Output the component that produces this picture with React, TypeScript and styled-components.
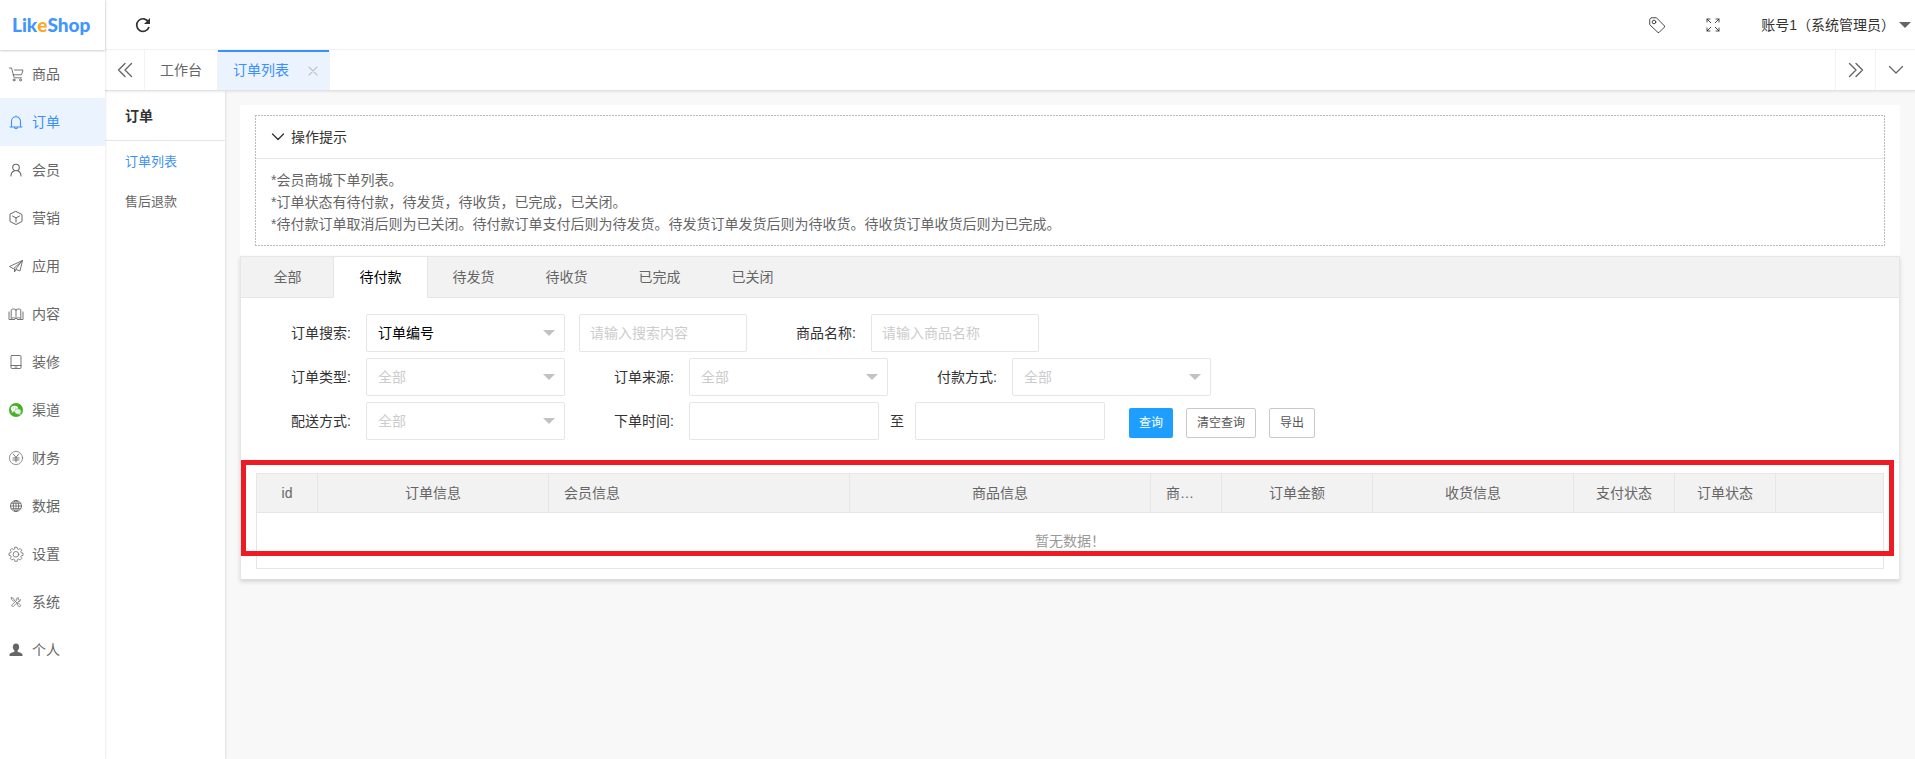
import React from "react";
import styled, { createGlobalStyle } from "styled-components";

const BLUE = "#3a91fb";
const BLUE_SOFT = "#ebf3ff";
const LINE = "#e6e6e6";

const GlobalStyle = createGlobalStyle`
  *, *::before, *::after { box-sizing: border-box; }
  body {
    margin: 0;
    background: #f8f8f8;
    color: #333;
    font: 14px/22px "Liberation Sans", "Noto Sans CJK SC", sans-serif;
  }
  button, input, select { font: inherit; color: inherit; margin: 0; }
  button { cursor: pointer; }
  a { color: inherit; text-decoration: none; }
  ul { list-style: none; margin: 0; padding: 0; }
  p { margin: 0; }
`;

const Shell = styled.div`
  display: flex;
  min-height: 100vh;
`;

/* ---- primary sidebar ---- */
const Sidebar = styled.aside`
  flex: 0 0 105px;
  background: #fff;
  box-shadow: 1px 0 2px rgba(0, 0, 0, 0.08);
  z-index: 2;
`;

const Logo = styled.a`
  display: flex;
  align-items: center;
  height: 50px;
  padding-left: 12px;
  box-shadow: 0 1px 2px rgba(0, 0, 0, 0.2);
  color: #4095ff;
  font: 900 19px/24px Lato, sans-serif;
`;

const LogoAccent = styled.span`
  color: #ffa724;
`;

const NavLink = styled.a<{ $active?: boolean }>`
  display: flex;
  align-items: center;
  gap: 8px;
  height: 48px;
  padding-left: 8px;
  color: ${(p) => (p.$active ? BLUE : "#666")};
  background: ${(p) => (p.$active ? BLUE_SOFT : "transparent")};
`;

const Icon = styled.svg<{ $size?: number }>`
  flex: none;
  display: block;
  width: ${(p) => p.$size ?? 16}px;
  height: ${(p) => p.$size ?? 16}px;
  fill: none;
  stroke: currentColor;
  stroke-width: 0.9;
  stroke-linecap: round;
  stroke-linejoin: round;
`;

/* ---- top area ---- */
const Main = styled.div`
  flex: 1;
  min-width: 0;
  display: flex;
  flex-direction: column;
`;

const TopBar = styled.header`
  display: flex;
  align-items: center;
  height: 50px;
  padding: 0 4px 0 30px;
  background: #fff;
  border-bottom: 1px solid #f2f2f2;
`;

const IconButton = styled.button`
  display: flex;
  align-items: center;
  justify-content: center;
  width: 16px;
  height: 16px;
  padding: 0;
  border: 0;
  background: none;
`;

const TopRight = styled.div`
  display: flex;
  align-items: center;
  gap: 40px;
  margin-left: auto;
`;

const UserButton = styled.button`
  display: flex;
  align-items: center;
  gap: 4px;
  padding: 0;
  border: 0;
  background: none;
  line-height: 24px;
`;

const Caret = styled.span<{ $color: string }>`
  border: 6px solid transparent;
  border-top-color: ${(p) => p.$color};
  border-bottom-width: 0;
`;

const PageTabs = styled.nav`
  display: flex;
  height: 41px;
  background: #fff;
  border-bottom: 1px solid #e2e2e2;
  box-shadow: 0 1px 2px rgba(0, 0, 0, 0.08);
  color: #666;
  z-index: 1;
`;

const TabControl = styled.button<{ $side: "left" | "right" }>`
  display: flex;
  align-items: center;
  justify-content: center;
  width: 40px;
  padding: 0;
  border: 0 solid #f2f2f2;
  border-left-width: ${(p) => (p.$side === "right" ? "1px" : "0")};
  border-right-width: ${(p) => (p.$side === "left" ? "1px" : "0")};
  background: none;
`;

const PageTab = styled.div<{ $active?: boolean }>`
  display: flex;
  align-items: center;
  gap: 18px;
  padding: 0 ${(p) => (p.$active ? "10px" : "15px")} 0 15px;
  border-right: 1px solid #f2f2f2;
  color: ${(p) => (p.$active ? BLUE : "#666")};
  background: ${(p) => (p.$active ? BLUE_SOFT : "transparent")};
  box-shadow: ${(p) => (p.$active ? `inset 0 2px 0 ${BLUE}` : "none")};
`;

const CloseButton = styled.button`
  padding: 2px 0 0;
  border: 0;
  background: none;
  color: #c2c2c2;
`;

const Spacer = styled.div`
  flex: 1;
`;

const Body = styled.div`
  flex: 1;
  display: flex;
`;

/* ---- secondary menu ---- */
const SubMenu = styled.nav`
  flex: 0 0 120px;
  background: #fff;
  box-shadow: 1px 0 2px rgba(0, 0, 0, 0.1);
`;

const SubTitle = styled.div`
  height: 50px;
  margin-bottom: 1px;
  padding-left: 20px;
  border-bottom: 1px solid ${LINE};
  font-weight: bold;
  line-height: 50px;
`;

const SubLink = styled.a<{ $active?: boolean }>`
  display: block;
  padding-left: 20px;
  font-size: 13px;
  line-height: 40px;
  color: ${(p) => (p.$active ? BLUE : "#666")};
`;

/* ---- content ---- */
const Content = styled.main`
  flex: 1;
  min-width: 0;
  padding: 14px 15px;
`;

const Card = styled.section`
  background: #fff;
  border-radius: 2px;
  padding-top: 10px;
`;

/* fine dashes, two pixels on and one off, along each edge */
const Tips = styled.section`
  --h: repeating-linear-gradient(90deg, #bbb 0 2px, transparent 2px 3px);
  --v: repeating-linear-gradient(#bbb 0 2px, transparent 2px 3px);
  margin: 0 15px 10px;
  padding: 1px;
  background:
    var(--h) top / 100% 1px no-repeat,
    var(--h) bottom / 100% 1px no-repeat,
    var(--v) left / 1px 100% no-repeat,
    var(--v) right / 1px 100% no-repeat;
`;

const TipsHead = styled.button`
  display: flex;
  align-items: center;
  gap: 6px;
  width: 100%;
  height: 43px;
  padding: 0 15px;
  border: 0;
  border-bottom: 1px solid ${LINE};
  background: none;
`;

const TipsBody = styled.div`
  padding: 10px 15px;
  color: #666;
`;

const Panel = styled.section`
  position: relative;
  border: 1px solid ${LINE};
  border-bottom-color: #ddd;
  box-shadow: 0 2px 4px rgba(0, 0, 0, 0.14);
`;

const StatusTabs = styled.div`
  display: flex;
  height: 41px;
  background: #f2f2f2;
`;

const StatusTab = styled.button<{ $active?: boolean }>`
  width: ${(p) => (p.$active ? "95px" : "93px")};
  margin: 0 ${(p) => (p.$active ? "-1px" : "0")};
  padding: 0;
  border: 0 solid ${LINE};
  border-width: ${(p) => (p.$active ? "0 1px 1px" : "0 0 1px")};
  border-bottom-color: ${(p) => (p.$active ? "#fff" : LINE)};
  background: ${(p) => (p.$active ? "#fff" : "transparent")};
  color: ${(p) => (p.$active ? "#000" : "#666")};
  z-index: ${(p) => (p.$active ? 1 : 0)};
`;

const StatusRest = styled.div`
  flex: 1;
  border-bottom: 1px solid ${LINE};
`;

const Filters = styled.form`
  display: flex;
  flex-direction: column;
  gap: 6px;
  padding: 16px 30px 22px;
  border-bottom: 1px solid #f6f6f6;
`;

const Row = styled.div`
  display: flex;
  flex-wrap: wrap;
  column-gap: 29px;
`;

const Group = styled.div<{ $gap?: number }>`
  display: flex;
  align-items: center;
  gap: ${(p) => p.$gap ?? 0}px;
`;

const Label = styled.label`
  width: 95px;
  padding-right: 15px;
  text-align: right;
`;

const Input = styled.input<{ $width: number }>`
  width: ${(p) => p.$width}px;
  height: 38px;
  padding: 0 10px;
  border: 1px solid ${LINE};
  border-radius: 2px;
  background: #fff;
  outline: 0;
  &::placeholder { color: #ccc; }
`;

const SelectBox = styled.div`
  display: grid;
  align-items: center;
  width: 199px;
  height: 38px;
  > * { grid-area: 1 / 1; }
  > span { justify-self: end; margin-right: 10px; pointer-events: none; }
`;

const Select = styled.select<{ $muted?: boolean }>`
  appearance: none;
  width: 100%;
  height: 38px;
  padding: 0 30px 0 11px;
  border: 1px solid ${LINE};
  border-radius: 2px;
  background: #fff;
  color: ${(p) => (p.$muted ? "#ccc" : "#000")};
`;

const Actions = styled.div`
  display: flex;
  gap: 13px;
  padding-top: 6px;
  margin-left: -5px;
`;

const Button = styled.button<{ $primary?: boolean }>`
  height: 30px;
  padding: 0 10px;
  border: ${(p) => (p.$primary ? "0" : "1px solid #c9c9c9")};
  border-radius: 2px;
  background: ${(p) => (p.$primary ? "#1e9fff" : "#fff")};
  color: ${(p) => (p.$primary ? "#fff" : "#555")};
  font-size: 12px;
  line-height: 28px;
`;

const TableWrap = styled.div`
  padding: 10px 15px;
`;

const Table = styled.table`
  width: 100%;
  table-layout: fixed;
  border-collapse: collapse;
  border: 1px solid ${LINE};
  color: #666;
`;

const Th = styled.th<{ $width?: number; $left?: boolean }>`
  width: ${(p) => (p.$width ? `${p.$width}px` : "auto")};
  height: 39px;
  padding: 0 15px;
  border: 1px solid ${LINE};
  background: #f2f2f2;
  font-weight: normal;
  text-align: ${(p) => (p.$left ? "left" : "center")};
  white-space: nowrap;
`;

const Empty = styled.td`
  height: 56px;
  padding: 0;
  text-align: center;
  color: #999;
`;

const Highlight = styled.div`
  position: absolute;
  top: 203px;
  left: 0;
  right: 5px;
  height: 96px;
  border: 5px solid #ed1c24;
  pointer-events: none;
`;

/* ---- icons, all on a 16 unit grid ---- */
const nav = [
  {
    label: "商品",
    icon: (
      <>
        <path d="M1.500 2h2l2.700 9.800h7.300M5 8.800h8.600L15 4H6.500" />
        <circle cx="6" cy="14" r="1" />
        <circle cx="12.500" cy="14" r="1" />
      </>
    ),
  },
  {
    label: "订单",
    icon: <path d="M2 13h12M3.500 13V7.200a4.500 4.500 0 0 1 9 0V13M8 2.700V1.800M6.500 13.200a1.500 1.500 0 0 0 3 0" strokeWidth="1.100" />,
  },
  {
    label: "会员",
    icon: (
      <>
        <circle cx="8" cy="5.500" r="3.300" strokeWidth="1.100" />
        <path d="M3 14c0-3 1.600-4.700 3.500-5.300M13 14c0-3-1.600-4.700-3.500-5.300" strokeWidth="1.100" />
      </>
    ),
  },
  {
    label: "营销",
    icon: <path d="M8 1.500 14 4.500v7L8 14.500 2 11.500v-7zM4.500 6 8 8l3.500-2M8 8v4" strokeWidth="1" />,
  },
  {
    label: "应用",
    icon: <path d="M14.500 2.500 1.500 8.500l3.500 2zM14.500 2.500 12 13l-4-1.500zM6.500 10.800V14L8 11.500" />,
  },
  {
    label: "内容",
    icon: (
      <path d="M8 4c-1-1.500-4-1.500-4.800 0v8.500c1-1 3.800-1 4.800.5 1-1.500 3.800-1.500 4.800-.5V4C12 2.500 9 2.500 8 4zM8 4v8.500M1 6v7.500h5.500M15 6v7.500H9.500" />
    ),
  },
  {
    label: "装修",
    icon: (
      <>
        <rect x="3" y="1.500" width="10" height="13" rx="1" />
        <path d="M3 11.500h10M7 13h2" />
      </>
    ),
  },
  {
    label: "渠道",
    icon: (
      <g stroke="none">
        <circle cx="8" cy="8" r="7" fill="#44b025" />
        <ellipse cx="6.500" cy="6.800" rx="3.600" ry="3" fill="#fff" />
        <path d="m4 9-.5 2 2-1.200z" fill="#fff" />
        <ellipse cx="10" cy="9.500" rx="3.300" ry="2.700" fill="#fff" stroke="#44b025" strokeWidth=".6" />
        <path d="m12 11.500.5 1.500-2-1z" fill="#fff" />
        <g fill="#44b025">
          <circle cx="5.300" cy="6" r=".5" />
          <circle cx="7.800" cy="6" r=".5" />
          <circle cx="9" cy="9" r=".4" />
          <circle cx="11" cy="9" r=".4" />
        </g>
      </g>
    ),
  },
  {
    label: "财务",
    icon: (
      <>
        <circle cx="8" cy="8" r="6.600" strokeWidth=".7" />
        <path d="m5.300 4 2.700 3.500L10.700 4M8 7.500V12M5 8h6M5 10h6" />
      </>
    ),
  },
  {
    label: "数据",
    icon: (
      <>
        <circle cx="8" cy="8" r="5.500" />
        <ellipse cx="8" cy="8" rx="2.700" ry="5.500" />
        <path d="M8 2.500v11M2.500 8h11M3.200 5.300h9.600M3.200 10.700h9.600" strokeWidth=".8" />
      </>
    ),
  },
  {
    label: "设置",
    icon: (
      <>
        <path
          d="m6.800 1.200h2.400l.4 1.900 1.200.5 1.600-1.100 1.700 1.700-1.100 1.600.5 1.200 1.900.4v2.400l-1.900.4-.5 1.200 1.100 1.600-1.700 1.700-1.600-1.100-1.200.5-.4 1.900H6.800l-.4-1.900-1.200-.5-1.600 1.100-1.700-1.700L3 11.400l-.5-1.200-1.900-.4V7.400l1.900-.4L3 5.800 1.900 4.200l1.700-1.700 1.600 1.100 1.200-.5z"
          strokeWidth=".8"
          transform="translate(0.4 0.1) scale(0.95)"
        />
        <circle cx="8" cy="8.300" r="2.800" strokeWidth=".8" />
      </>
    ),
  },
  {
    label: "系统",
    icon: (
      <g transform="translate(1.400 1.500) scale(0.820)">
        <path d="m2.500 2.500 2 .8L6.200 6 5 7 3 5zM6.200 6l3 3M9.500 10l1.200-1L14 12l-1.500 1.800z" />
        <path d="M13.500 5.500a2.300 2.300 0 0 1-3 2L4.500 13.700 2.500 12 8.700 6a2.300 2.300 0 0 1 2.500-3.300l-1 1.800 1.500 1z" />
      </g>
    ),
  },
  {
    label: "个人",
    icon: (
      <path
        d="M8 1.500c2.100 0 3.200 1.500 3.200 3.600 0 1.500-.7 2.700-1.600 3.400v1.200c1.500.8 4.900 1 4.900 3.100V14h-13v-1.200c0-2.100 3.400-2.300 4.900-3.100V8.500C5.500 7.800 4.800 6.600 4.800 5.100 4.800 3 5.900 1.500 8 1.500z"
        fill="currentColor"
        stroke="none"
      />
    ),
  },
];

const columns: { title: string; width?: number; left?: boolean }[] = [
  { title: "id", width: 61 },
  { title: "订单信息", width: 231 },
  { title: "会员信息", width: 301, left: true },
  { title: "商品信息", width: 301 },
  { title: "商…", width: 71, left: true },
  { title: "订单金额", width: 151 },
  { title: "收货信息", width: 201 },
  { title: "支付状态", width: 101 },
  { title: "订单状态", width: 101 },
  { title: "" },
];

const statuses = ["全部", "待付款", "待发货", "待收货", "已完成", "已关闭"];

function SelectField(props: { id: string; label: string; value: string; muted?: boolean }) {
  return (
    <Group>
      <Label htmlFor={props.id}>{props.label}:</Label>
      <SelectBox>
        <Select id={props.id} $muted={props.muted}>
          <option>{props.value}</option>
        </Select>
        <Caret $color="#c2c2c2" />
      </SelectBox>
    </Group>
  );
}

export default function App() {
  return (
    <>
      <GlobalStyle />
      <Shell>
        <Sidebar>
          <Logo href="#">
            Lik<LogoAccent>e</LogoAccent>Shop
          </Logo>
          <ul>
            {nav.map((item) => (
              <li key={item.label}>
                <NavLink href="#" $active={item.label === "订单"}>
                  <Icon viewBox="0 0 16 16">{item.icon}</Icon>
                  {item.label}
                </NavLink>
              </li>
            ))}
          </ul>
        </Sidebar>

        <Main>
          <TopBar>
            <IconButton aria-label="刷新">
              <Icon viewBox="0 0 16 16">
                <path d="M13.500 5A6.300 6.300 0 1 0 14 10" strokeWidth="1.700" strokeLinecap="butt" />
                <path d="M15 1v6H9z" fill="currentColor" stroke="none" />
              </Icon>
            </IconButton>
            <TopRight>
              <IconButton aria-label="标签">
                <Icon viewBox="0 0 16 16">
                  <path d="M1 2 2 .8h5.500L15.500 9v1L10 15.500H9L1 8z" />
                  <circle cx="5" cy="5" r="1.800" />
                </Icon>
              </IconButton>
              <IconButton aria-label="全屏">
                <Icon viewBox="0 0 16 16">
                  <path d="M2 5V2h3M2 2l3.800 3.800M11 2h3v3M14 2l-3.800 3.800M2 11v3h3M2 14l3.800-3.800M14 11v3h-3M14 14l-3.800-3.800" />
                </Icon>
              </IconButton>
              <UserButton>
                账号1（系统管理员）
                <Caret $color="#666" />
              </UserButton>
            </TopRight>
          </TopBar>

          <PageTabs>
            <TabControl $side="left" aria-label="向左">
              <Icon viewBox="0 0 16 16">
                <path d="M8 1.500 1.500 8 8 14.500M14.500 1.500 8 8l6.500 6.500" strokeWidth="1.400" />
              </Icon>
            </TabControl>
            <PageTab>
              <a href="#">工作台</a>
            </PageTab>
            <PageTab $active>
              <a href="#">订单列表</a>
              <CloseButton aria-label="关闭">
                <Icon viewBox="0 0 12 12" $size={12}>
                  <path d="m2 2 8 8M10 2l-8 8" strokeWidth="1.100" />
                </Icon>
              </CloseButton>
            </PageTab>
            <Spacer />
            <TabControl $side="right" aria-label="向右">
              <Icon viewBox="0 0 16 16">
                <path d="M1.500 1.500 8 8l-6.500 6.500M8 1.500 14.500 8 8 14.500" strokeWidth="1.400" />
              </Icon>
            </TabControl>
            <TabControl $side="right" aria-label="更多">
              <Icon viewBox="0 0 16 16">
                <path d="m1.500 4.500 6.500 6.500 6.500-6.500" strokeWidth="1.300" />
              </Icon>
            </TabControl>
          </PageTabs>

          <Body>
            <SubMenu>
              <SubTitle>订单</SubTitle>
              <SubLink href="#" $active>
                订单列表
              </SubLink>
              <SubLink href="#">售后退款</SubLink>
            </SubMenu>

            <Content>
              <Card>
                <Tips>
                  <TipsHead>
                    <Icon viewBox="0 0 14 14" $size={14}>
                      <path d="m1.500 4 5.500 5.500L12.500 4" strokeWidth="1.300" />
                    </Icon>
                    操作提示
                  </TipsHead>
                  <TipsBody>
                    <p>*会员商城下单列表。</p>
                    <p>*订单状态有待付款，待发货，待收货，已完成，已关闭。</p>
                    <p>*待付款订单取消后则为已关闭。待付款订单支付后则为待发货。待发货订单发货后则为待收货。待收货订单收货后则为已完成。</p>
                  </TipsBody>
                </Tips>

                <Panel>
                  <StatusTabs role="tablist">
                    {statuses.map((s) => (
                      <StatusTab key={s} role="tab" $active={s === "待付款"}>
                        {s}
                      </StatusTab>
                    ))}
                    <StatusRest />
                  </StatusTabs>

                  <Filters onSubmit={(e) => e.preventDefault()}>
                    <Row>
                      <Group $gap={14}>
                        <SelectField id="search-type" label="订单搜索" value="订单编号" />
                        <Input $width={168} placeholder="请输入搜索内容" aria-label="搜索内容" />
                      </Group>
                      <Group>
                        <Label htmlFor="goods">商品名称:</Label>
                        <Input $width={168} id="goods" placeholder="请输入商品名称" />
                      </Group>
                    </Row>
                    <Row>
                      <SelectField id="order-type" label="订单类型" value="全部" muted />
                      <SelectField id="order-source" label="订单来源" value="全部" muted />
                      <SelectField id="pay-way" label="付款方式" value="全部" muted />
                    </Row>
                    <Row>
                      <SelectField id="delivery" label="配送方式" value="全部" muted />
                      <Group>
                        <Label htmlFor="start">下单时间:</Label>
                        <Group $gap={11}>
                          <Input $width={190} id="start" />
                          至
                          <Input $width={190} aria-label="结束时间" />
                        </Group>
                      </Group>
                      <Actions>
                        <Button $primary>查询</Button>
                        <Button type="button">清空查询</Button>
                        <Button type="button">导出</Button>
                      </Actions>
                    </Row>
                  </Filters>

                  <TableWrap>
                    <Table>
                      <thead>
                        <tr>
                          {columns.map((c, i) => (
                            <Th key={i} $width={c.width} $left={c.left}>
                              {c.title}
                            </Th>
                          ))}
                        </tr>
                      </thead>
                      <tbody>
                        <tr>
                          <Empty colSpan={columns.length}>暂无数据！</Empty>
                        </tr>
                      </tbody>
                    </Table>
                  </TableWrap>
                  <Highlight />
                </Panel>
              </Card>
            </Content>
          </Body>
        </Main>
      </Shell>
    </>
  );
}
